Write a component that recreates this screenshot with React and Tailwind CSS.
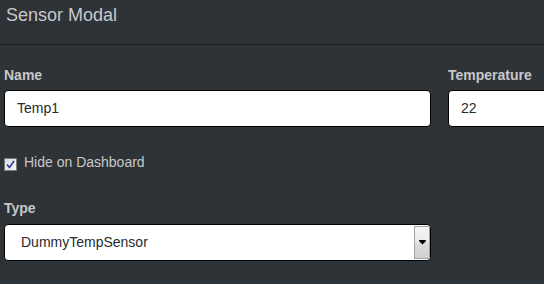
import React from "react";

export default function App() {
  return (
    <div className="w-[544px] h-[284px] overflow-hidden bg-[#2e3338] text-[#c8c8c8] font-['Liberation_Sans',Arial,sans-serif]">
      <div className="h-[45px] border-b border-[#1c1e22] px-[6px] pt-[2px] text-[18px] leading-[26px] text-[#c8c8c8]">
        Sensor Modal
      </div>
      <div className="pl-[4px] pt-[20px]">
        <div className="flex gap-[17px]">
          <div className="w-[427px] shrink-0">
            <label className="block text-[14px] font-bold leading-[20px] mb-[5px]">Name</label>
            <div className="h-[37px] border border-black rounded-[4px] bg-white px-[12px] flex items-center text-[14px] text-[#272b30]">
              Temp1
            </div>
          </div>
          <div className="w-[140px] shrink-0">
            <label className="block text-[14px] font-bold leading-[20px] mb-[5px]">Temperature</label>
            <div className="h-[37px] border border-black rounded-[4px] bg-white px-[12px] flex items-center text-[14px] text-[#272b30]">
              22
            </div>
          </div>
        </div>
        <div className="mt-[25px] flex items-start gap-[7px] text-[14px] leading-[20px]">
          <div className="mt-[6px] w-[13px] h-[13px] border border-[#7b7b7b] bg-[linear-gradient(135deg,#d9dde3,#f4f5f7)] flex items-center justify-center">
            <svg width="9" height="9" viewBox="0 0 9 9">
              <path d="M1 4.5 L3.5 7.5 L8 1" fill="none" stroke="#2a3a9c" strokeWidth="1.6" />
            </svg>
          </div>
          <span>Hide on Dashboard</span>
        </div>
        <div className="mt-[26px]">
          <label className="block text-[14px] font-bold leading-[20px] mb-[6px]">Type</label>
          <div className="w-[427px] h-[37px] border border-black rounded-[4px] bg-white flex items-stretch">
            <div className="flex-1 pl-[16px] flex items-center text-[14px] text-[#272b30]">DummyTempSensor</div>
            <div className="w-[16px] my-[1px] border border-[#a3a3a3] bg-[linear-gradient(#f3f3f3_0%,#ececec_48%,#dcdcdc_52%,#cfcfcf_100%)] flex items-center justify-center">
              <svg width="7" height="5" viewBox="0 0 7 5">
                <path d="M0 0 H7 V1 L3.5 4.5 L0 1 Z" fill="#000" />
              </svg>
            </div>
          </div>
        </div>
      </div>
    </div>
  );
}
